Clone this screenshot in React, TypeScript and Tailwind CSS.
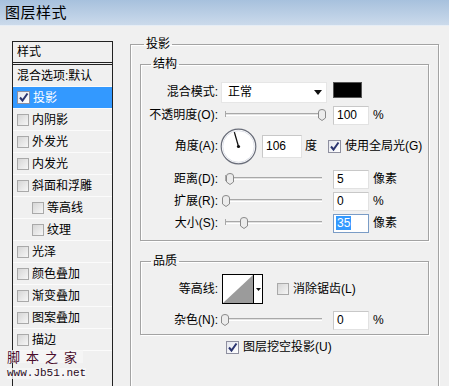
import React from "react";

const listItems: { label: string; indent?: boolean; checked?: boolean; selected?: boolean; plain?: boolean }[] = [
  { label: "混合选项:默认", plain: true },
  { label: "投影", checked: true, selected: true },
  { label: "内阴影" },
  { label: "外发光" },
  { label: "内发光" },
  { label: "斜面和浮雕" },
  { label: "等高线", indent: true },
  { label: "纹理", indent: true },
  { label: "光泽" },
  { label: "颜色叠加" },
  { label: "渐变叠加" },
  { label: "图案叠加" },
  { label: "描边" },
];

function CheckBox({ checked = false, className = "" }: { checked?: boolean; className?: string }) {
  if (checked) {
    return (
      <div className={`relative w-[13px] h-[13px] flex-shrink-0 border border-[#8e8f9f] bg-gradient-to-br from-[#e4e6ee] to-[#ffffff] ${className}`}>
        <svg width="11" height="11" viewBox="0 0 11 11" className="absolute left-0 top-0">
          <path d="M2 5.5 L4.5 8.5 L9.5 1.5" fill="none" stroke="#2a3470" strokeWidth="2" />
        </svg>
      </div>
    );
  }
  return (
    <div className={`w-[12px] h-[12px] flex-shrink-0 border border-[#a9a9a9] bg-gradient-to-br from-[#d6d6d6] to-[#f6f6f6] ${className}`} />
  );
}

// thin groove with a small shield-shaped thumb
function Slider({ pos }: { pos: number }) {
  return (
    <div className="relative w-[106px] h-[22px]">
      <div className="absolute left-[4px] right-[5px] top-[9px] h-[3px] border-t border-[#a8a8a8] border-b border-b-white bg-[#e2e2e2]" />
      <div className="absolute left-[4px] top-[7px] w-px h-[6px] bg-[#a8a8a8]" />
      <svg width="8" height="12" viewBox="0 0 8 12" className="absolute top-[5px]" style={{ left: pos - 4 }}>
        <path d="M0.5 3 Q0.5 0.5 4 0.5 Q7.5 0.5 7.5 3 L7.5 9 L4 11.5 L0.5 9 Z" fill="#ececec" stroke="#8a8a8a" />
      </svg>
    </div>
  );
}

function NumBox({ value, w = 36, h = 19, selected = false }: { value: string; w?: number; h?: number; selected?: boolean }) {
  return (
    <div
      className={`flex items-center pl-[2px] bg-white border ${selected ? "border-[#7a9cc6] bg-[#fafdff]" : "border-[#e2e2e2] border-t-[#c8c8c8] border-l-[#c8c8c8]"}`}
      style={{ width: w, height: h }}
    >
      <span className={`text-[12px] leading-[14px] px-[1px] ${selected ? "bg-[#3399ff] text-white" : "text-black"}`}>{value}</span>
    </div>
  );
}

function Label({ text }: { text: string }) {
  return <div className="w-[77px] text-right text-[12px] whitespace-nowrap">{text}</div>;
}

function SliderRow({ label, pos, value, unit, selected }: { label: string; pos: number; value: string; unit: string; selected?: boolean }) {
  return (
    <div className="flex items-center h-[22px]">
      <Label text={label} />
      <div className="ml-[3px]">
        <Slider pos={pos} />
      </div>
      <div className="ml-[6px]">
        <NumBox value={value} selected={selected} />
      </div>
      <span className="ml-[4px] text-[12px]">{unit}</span>
    </div>
  );
}

function Group({ title, className = "", legendClass = "", children }: { title: string; className?: string; legendClass?: string; children: React.ReactNode }) {
  return (
    <fieldset className={`border border-[#a3a3a3] shadow-[inset_1px_1px_0_#ffffff,1px_1px_0_#ffffff] ${className}`}>
      <legend className={`px-[2px] text-[12px] leading-[18px] ${legendClass}`}>{title}</legend>
      {children}
    </fieldset>
  );
}

function Dial() {
  const a = (106 * Math.PI) / 180;
  const x2 = 18.5 + Math.cos(a) * 15;
  const y2 = 18.5 - Math.sin(a) * 15;
  return (
    <svg width="37" height="37" viewBox="0 0 37 37">
      <circle cx="18.5" cy="18.5" r="17.3" fill="#ffffff" stroke="#6a6e7a" strokeWidth="1.2" />
      <circle cx="18.5" cy="18.5" r="15.8" fill="none" stroke="#dfe2ea" strokeWidth="1" />
      <line x1="18.5" y1="18.5" x2={x2} y2={y2} stroke="#111" strokeWidth="1.3" />
      <circle cx="18.5" cy="18.5" r="1.6" fill="#111" />
    </svg>
  );
}

export default function App() {
  return (
    <div className="relative w-[449px] h-[386px] overflow-hidden bg-[#f0f0f0] text-black font-['Liberation_Sans','Noto_Sans_CJK_SC',sans-serif]">
      {/* Title bar */}
      <div className="h-[26px] flex items-center pl-[5px] bg-gradient-to-b from-[#a7c1dd] to-[#cbdaeb] border-b border-[#e6edf5]">
        <span className="text-[15px] leading-none tracking-[0.5px]">图层样式</span>
      </div>

      <div className="flex items-start pl-[12px] border-l-2 border-l-[#fafafa] -ml-[2px]">
        {/* Style list */}
        <div className="mt-[15px] w-[101px] h-[400px] border border-[#222] border-b-0">
          <div className="h-[23px] flex items-center pl-[4px] text-[12px] border-b-[3px] border-double border-[#222]">样式</div>
          {listItems.map((it) => (
            <div
              key={it.label}
              className={`h-[22px] flex items-center text-[12px] border-b border-[#fbfbfb] ${
                it.selected ? "bg-[#3399ff] text-white" : ""
              } ${it.indent ? "pl-[19px]" : "pl-[4px]"}`}
            >
              {!it.plain && <CheckBox checked={it.checked} className="mr-[3px]" />}
              <span className="whitespace-nowrap">{it.label}</span>
            </div>
          ))}
        </div>

        {/* Drop shadow panel */}
        <Group title="投影" className="mt-[9px] ml-[17px] w-[309px] h-[420px] pb-0" legendClass="ml-[13px]">
          <Group title="结构" className="mt-[2px] mx-[9px] pt-[8px] pb-[6px]" legendClass="ml-[10px]">
            <div className="flex items-center h-[22px]">
              <Label text="混合模式:" />
              <div className="ml-[3px] w-[106px] h-[21px] bg-white border border-[#e6e6e6] flex items-center justify-between pl-[6px] pr-[4px]">
                <span className="text-[12px]">正常</span>
                <svg width="8" height="5" viewBox="0 0 8 5">
                  <path d="M0 0 L8 0 L4 5 Z" fill="#111" />
                </svg>
              </div>
              <div className="ml-[6px] self-start mt-[1px] w-[29px] h-[16px] bg-black border border-[#555]" />
            </div>
            <div className="mt-[1px]">
              <SliderRow label="不透明度(O):" pos={101} value="100" unit="%" />
            </div>
            <div className="mt-[2px] flex items-center h-[36px]">
              <Label text="角度(A):" />
              <div className="ml-[2px]">
                <Dial />
              </div>
              <div className="ml-[5px]">
                <NumBox value="106" w={40} h={23} />
              </div>
              <span className="ml-[3px] text-[12px]">度</span>
              <CheckBox checked className="ml-[11px]" />
              <span className="ml-[4px] text-[12px] whitespace-nowrap">使用全局光(G)</span>
            </div>
            <div className="mt-[4px]">
              <SliderRow label="距离(D):" pos={9} value="5" unit="像素" />
            </div>
            <SliderRow label="扩展(R):" pos={5} value="0" unit="%" />
            <SliderRow label="大小(S):" pos={23} value="35" unit="像素" selected />
          </Group>

          <Group title="品质" className="mt-[11px] mx-[9px] pt-[4px] pb-[3px]" legendClass="ml-[10px]">
            <div className="flex items-center h-[30px]">
              <Label text="等高线:" />
              <div className="ml-[4px] w-[41px] h-[30px] border border-black bg-white flex">
                <svg width="30" height="28" viewBox="0 0 30 28" className="block">
                  <polygon points="0,28 30,0 30,28" fill="#9b9b9b" />
                </svg>
                <div className="flex-1 border-l border-black flex items-center justify-center">
                  <svg width="5" height="3" viewBox="0 0 5 3">
                    <path d="M0 0 L5 0 L2.5 3 Z" fill="#111" />
                  </svg>
                </div>
              </div>
              <CheckBox className="ml-[14px]" />
              <span className="ml-[4px] text-[12px] whitespace-nowrap">消除锯齿(L)</span>
            </div>
            <div className="mt-[5px]">
              <SliderRow label="杂色(N):" pos={4} value="0" unit="%" />
            </div>
          </Group>

          <div className="mt-[4px] ml-[95px] flex items-center h-[16px]">
            <CheckBox checked />
            <span className="ml-[4px] text-[12px] whitespace-nowrap">图层挖空投影(U)</span>
          </div>
        </Group>
      </div>

      {/* Watermark */}
      <div className="absolute left-[7px] top-[350px] flex flex-col items-start leading-none">
        <span className="text-[13px] text-[#4a0d2c] tracking-[6px] bg-[#f6f6f6]/80 font-['Noto_Sans_CJK_SC',sans-serif]">脚本之家</span>
        <span className="mt-[5px] text-[11px] text-[#2a0a1c] font-['Liberation_Mono',monospace] bg-[#f6f6f6]/80">www.Jb51.net</span>
      </div>
    </div>
  );
}
